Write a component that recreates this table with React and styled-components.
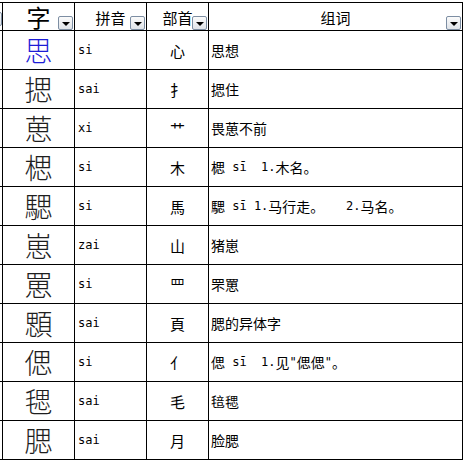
import React from "react";
import styled, { createGlobalStyle } from "styled-components";

const Global = createGlobalStyle`
  html, body { margin: 0; padding: 0; background: #fff; }
  body { font-family: "Noto Sans CJK SC", sans-serif; }
  * { box-sizing: border-box; }
`;

const Sheet = styled.div`
  margin-top: 2px;
  width: 463px;
  display: grid;
  grid-template-columns: 3px 72px 72px 62px 254px;
  grid-template-rows: 28px repeat(11, 39px);
  border-top: 1px solid #000;
  background: #fff;
`;

const Cell = styled.div`
  position: relative;
  border-right: 1px solid #000;
  border-bottom: 1px solid #000;
  display: flex;
  align-items: center;
  justify-content: ${(p) => (p.$align === "left" ? "flex-start" : "center")};
  padding-left: ${(p) => (p.$align === "left" ? "2px" : "0")};
  overflow: ${(p) => (p.$clip ? "hidden" : "visible")};
  white-space: pre;
  color: #000;
`;

const HeadCell = styled(Cell)`
  font-family: "Noto Sans CJK SC", sans-serif;
  font-size: ${(p) => (p.$big ? "24px" : "15px")};
  font-weight: 400;
  padding-top: ${(p) => (p.$big ? "1px" : "2px")};
  line-height: 1;
`;

const CharCell = styled(Cell)`
  font-family: "Noto Sans CJK SC", sans-serif;
  font-size: 28px;
  font-weight: 300;
  line-height: 1;
  color: ${(p) => (p.$blue ? "#1c1cd6" : "#1e1e1e")};
`;

const PinyinCell = styled(Cell)`
  font-family: "DejaVu Sans Mono", monospace;
  font-size: 12px;
  padding-left: 3px;
`;

const RadicalCell = styled(Cell)`
  font-family: "Noto Sans CJK SC", sans-serif;
  font-size: 15px;
`;

const WordCell = styled(Cell)`
  font-family: "Noto Sans CJK SC", sans-serif;
  font-size: 14px;
  padding-left: 2px;
`;

const Lat = styled.span`
  font-family: "DejaVu Sans Mono", monospace;
  font-size: 12px;
`;

const DropBtn = styled.span`
  position: absolute;
  right: ${(p) => (p.$stub ? "0" : "1px")};
  bottom: ${(p) => (p.$stub ? "4px" : "0")};
  width: 15px;
  height: 14px;
  border: 1px solid #7d8ea3;
  border-radius: 2px;
  background: linear-gradient(#fbfbfb, #dfe3e8);
  display: flex;
  align-items: center;
  justify-content: center;
`;

const Tri = styled.span`
  width: 0;
  height: 0;
  margin-top: 2px;
  border-left: 4px solid transparent;
  border-right: 4px solid transparent;
  border-top: 4px solid #000;
`;

const rows = [
  ["思", "si", "心", "思想"],
  ["揌", "sai", "扌", "揌住"],
  ["葸", "xi", "艹", "畏葸不前"],
  ["楒", "si", "木", "楒 sī  1.木名。"],
  ["騦", "si", "馬", "騦 sī 1.马行走。   2.马名。"],
  ["崽", "zai", "山", "猪崽"],
  ["罳", "si", "罒", "罘罳"],
  ["顋", "sai", "頁", "腮的异体字"],
  ["偲", "si", "亻", "偲 sī  1.见\"偲偲\"。"],
  ["毸", "sai", "毛", "毰毸"],
  ["腮", "sai", "月", "脸腮"],
];

const CJK = /[\u3000-\u9fff\uff00-\uffef]/;

function splitRuns(text) {
  const parts = [];
  const re = /[\u3000-\u9fff\uff00-\uffef]+|[^\u3000-\u9fff\uff00-\uffef]+/g;
  let m;
  let i = 0;
  while ((m = re.exec(text))) {
    const s = m[0];
    parts.push(CJK.test(s[0]) ? <React.Fragment key={i}>{s}</React.Fragment> : <Lat key={i}>{s}</Lat>);
    i++;
  }
  return parts;
}

const Drop = ({ stub }) => (
  <DropBtn $stub={stub}>
    <Tri />
  </DropBtn>
);

export default function App() {
  return (
    <>
      <Global />
      <Sheet>
        <Cell $clip>
          <Drop stub />
        </Cell>
        <HeadCell $big>
          字<Drop />
        </HeadCell>
        <HeadCell>
          拼音<Drop />
        </HeadCell>
        <HeadCell>
          部首<Drop />
        </HeadCell>
        <HeadCell>
          组词<Drop />
        </HeadCell>
        {rows.map(([c, py, rad, word], idx) => (
          <React.Fragment key={idx}>
            <Cell />
            <CharCell $blue={idx === 0}>{c}</CharCell>
            <PinyinCell $align="left">{py}</PinyinCell>
            <RadicalCell>{rad}</RadicalCell>
            <WordCell $align="left">{splitRuns(word)}</WordCell>
          </React.Fragment>
        ))}
      </Sheet>
    </>
  );
}
